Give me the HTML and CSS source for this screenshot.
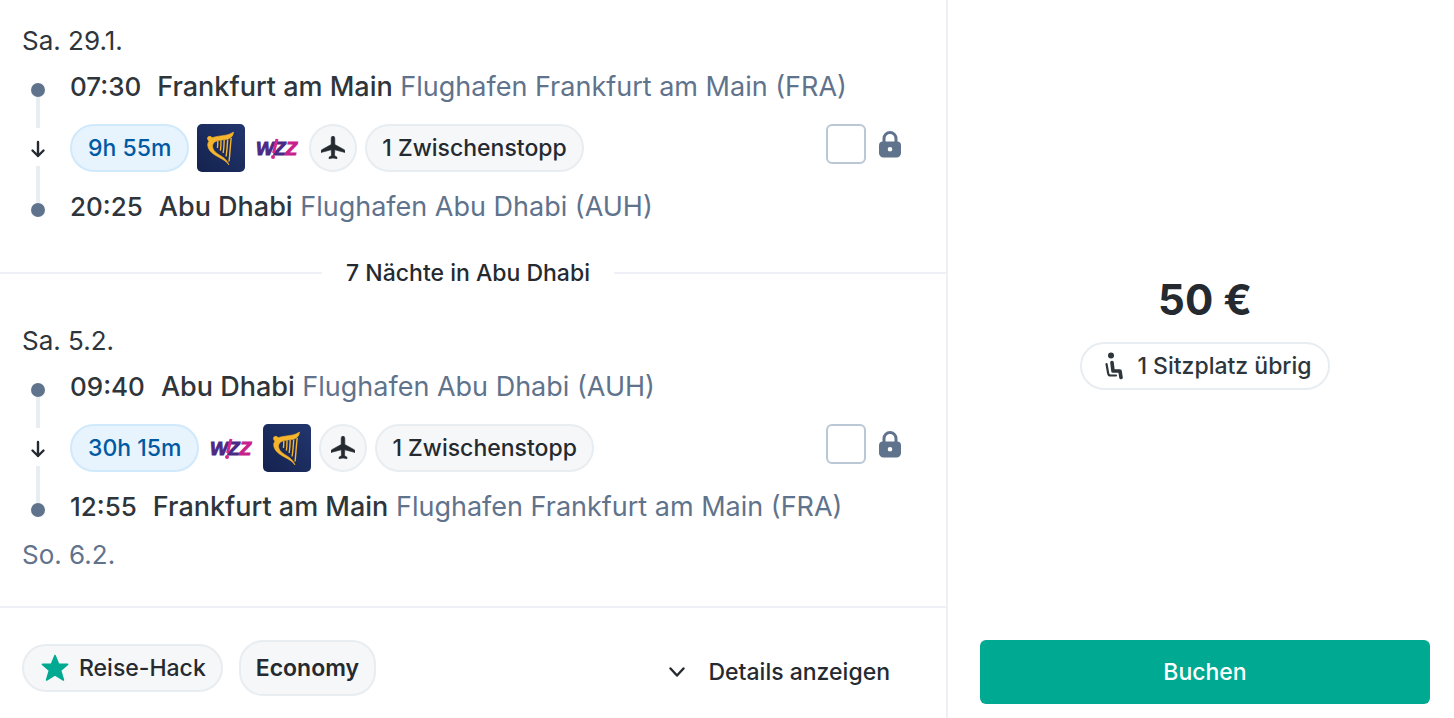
FILE: index.html
```html
<!DOCTYPE html>
<html lang="de">
<head>
    <meta charset="UTF-8">
    <meta name="viewport" content="width=device-width, initial-scale=1.0">
    <title>Frankfurt am Main – Abu Dhabi</title>
    <link rel="stylesheet" href="styles.css">
</head>
<body>
    <!-- Icons -->
    <svg class="sprite" aria-hidden="true">
        <defs>
            <linearGradient id="navy" x1="0" y1="1" x2="1" y2="0">
                <stop offset="0" stop-color="#14224d"/>
                <stop offset="1" stop-color="#22366f"/>
            </linearGradient>
        </defs>
        <symbol id="icon-arrow" viewBox="0 0 16 38">
            <path d="M8 14v14M2.500 22.500L8 28l5.500-5.500" fill="none" stroke="currentColor" stroke-width="2.400" stroke-linecap="round" stroke-linejoin="round"/>
        </symbol>
        <symbol id="icon-plane" viewBox="0 0 24 24">
            <path d="M12 0c1.200 0 1.800 1.300 1.800 2.800v5.700l9.400 5.200c.5.300.8.700.8 1.300v1.500l-10.200-2.700-.3 5.700 2.500 1.700v1.500L12 22l-4 .7v-1.500l2.500-1.700-.3-5.700L0 16.500V15c0-.6.3-1 .8-1.300l9.400-5.200V2.800C10.200 1.300 10.800 0 12 0z" fill="currentColor" stroke="currentColor" stroke-width=".6"/>
        </symbol>
        <symbol id="icon-lock" viewBox="0 0 22 28">
            <path d="M5 12V8.500a6 6 0 0 1 12 0V12" fill="none" stroke="currentColor" stroke-width="3"/>
            <path d="M4 11.500h14a4 4 0 0 1 4 4V23a4.500 4.500 0 0 1-4.500 4.500h-13A4.500 4.500 0 0 1 0 23v-7.500a4 4 0 0 1 4-4zM11 17a2.300 2.300 0 1 0 0 4.600 2.300 2.300 0 0 0 0-4.600z" fill="currentColor" fill-rule="evenodd"/>
        </symbol>
        <symbol id="logo-ryanair" viewBox="0 0 48 48">
            <rect width="48" height="48" rx="5" fill="url(#navy)"/>
            <path d="M10.500 13.500c1.200-1.600 3.400-1.500 4.500.2 5-1.500 9.500-1.800 13.500-2.500 3.500-.6 5.800-1.800 8-3.200-.2 3.800-2.500 6.400-6.200 7.200-4.800.9-9.500.6-12.600 2.800-3.200 2.300-2.600 6.800.6 9.900 4.500 4.200 11.200 5.500 13.700 13.100-2.700-3.700-5.800-5.500-9.300-7.300-6-3.100-11.500-6.700-12-12.500-.1-1.800.6-3 1.300-4-1-.8-1.700-2-1.500-3.700z" fill="#f7b52c" stroke="#f7b52c" stroke-width=".6"/>
            <path d="M34.200 14c-1 8-1.200 15.500-2.200 23.500M30.700 15.500c-.4 6-.8 11.500-1.600 17M27.200 16c-.1 5-.5 9.500-1 13M24 16.200c0 4-.2 7.800-.6 10.500M20.800 17c0 3-.1 5.500-.4 7" fill="none" stroke="#f7b52c" stroke-width="1.400"/>
        </symbol>
        <symbol id="icon-star" viewBox="0 0 28 28">
            <path d="M14 1.500l3.600 8.700 9 .2-7 6 2.800 9.600-8.400-5.300L5.600 26l2.800-9.600-7-6 9-.2z" fill="currentColor" stroke="currentColor" stroke-width="1.600" stroke-linejoin="round"/>
        </symbol>
        <symbol id="icon-seat" viewBox="0 0 18 28">
            <circle cx="6" cy="3.500" r="3" fill="currentColor"/>
            <path d="M7 10.500l1 8.500h7l1 6.500" fill="none" stroke="currentColor" stroke-width="3.600" stroke-linecap="round" stroke-linejoin="round"/>
            <path d="M1.500 12l1.700 9.500c.3 1.400 1 2 2.300 2H11" fill="none" stroke="currentColor" stroke-width="2.200" stroke-linecap="round"/>
        </symbol>
        <symbol id="icon-chevron" viewBox="0 0 16 16">
            <path d="M1.500 4.500L8 11.500l6.500-7" fill="none" stroke="currentColor" stroke-width="2.400" stroke-linecap="round" stroke-linejoin="round"/>
        </symbol>
    </svg>

    <article class="journey">
        <div class="trip">
            <!-- Hinflug -->
            <section class="leg">
                <div class="date">Sa. 29.1.</div>
                <div class="route">
                    <div class="timeline">
                        <span class="dot"></span>
                        <span class="line line-top"></span>
                        <svg class="arrow"><use href="#icon-arrow"/></svg>
                        <span class="line line-bottom"></span>
                        <span class="dot"></span>
                    </div>
                    <div class="stop">
                        <time class="time">07:30</time>
                        <span><strong>Frankfurt am Main</strong> <span class="airport">Flughafen Frankfurt am Main (FRA)</span></span>
                    </div>
                    <div class="info">
                        <span class="badge badge-time">9h 55m</span>
                        <svg class="carrier"><use href="#logo-ryanair"/></svg>
                        <svg class="carrier wizz" viewBox="0 0 48 48">
                            <text x="3" y="31">WZ<tspan class="pink">Z</tspan></text>
                            <path d="M24 15l-3.500 14" stroke="#d6248f" stroke-width="3"/>
                            <circle cx="20" cy="33" r="2" fill="#d6248f"/>
                        </svg>
                        <span class="badge badge-round"><svg class="plane"><use href="#icon-plane"/></svg></span>
                        <span class="badge">1 Zwischenstopp</span>
                        <label class="lock">
                            <input type="checkbox" aria-label="Hinflug merken">
                            <svg class="lock-icon"><use href="#icon-lock"/></svg>
                        </label>
                    </div>
                    <div class="stop">
                        <time class="time">20:25</time>
                        <span><strong>Abu Dhabi</strong> <span class="airport">Flughafen Abu Dhabi (AUH)</span></span>
                    </div>
                </div>
            </section>

            <div class="nights">7 Nächte in Abu Dhabi</div>

            <!-- Rückflug -->
            <section class="leg">
                <div class="date">Sa. 5.2.</div>
                <div class="route">
                    <div class="timeline">
                        <span class="dot"></span>
                        <span class="line line-top"></span>
                        <svg class="arrow"><use href="#icon-arrow"/></svg>
                        <span class="line line-bottom"></span>
                        <span class="dot"></span>
                    </div>
                    <div class="stop">
                        <time class="time">09:40</time>
                        <span><strong>Abu Dhabi</strong> <span class="airport">Flughafen Abu Dhabi (AUH)</span></span>
                    </div>
                    <div class="info">
                        <span class="badge badge-time">30h 15m</span>
                        <svg class="carrier wizz" viewBox="0 0 48 48">
                            <text x="3" y="31">WZ<tspan class="pink">Z</tspan></text>
                            <path d="M24 15l-3.500 14" stroke="#d6248f" stroke-width="3"/>
                            <circle cx="20" cy="33" r="2" fill="#d6248f"/>
                        </svg>
                        <svg class="carrier"><use href="#logo-ryanair"/></svg>
                        <span class="badge badge-round"><svg class="plane"><use href="#icon-plane"/></svg></span>
                        <span class="badge">1 Zwischenstopp</span>
                        <label class="lock">
                            <input type="checkbox" aria-label="Rückflug merken">
                            <svg class="lock-icon"><use href="#icon-lock"/></svg>
                        </label>
                    </div>
                    <div class="stop">
                        <time class="time">12:55</time>
                        <span><strong>Frankfurt am Main</strong> <span class="airport">Flughafen Frankfurt am Main (FRA)</span></span>
                    </div>
                </div>
                <div class="date date-arrival">So. 6.2.</div>
            </section>

            <footer class="trip-footer">
                <div class="tags">
                    <span class="badge"><svg class="star"><use href="#icon-star"/></svg>Reise-Hack</span>
                    <span class="badge badge-class">Economy</span>
                </div>
                <button class="details" type="button"><svg class="chevron"><use href="#icon-chevron"/></svg>Details anzeigen</button>
            </footer>
        </div>

        <aside class="booking">
            <div class="offer">
                <div class="price">50 €</div>
                <span class="badge badge-seats"><svg class="seat"><use href="#icon-seat"/></svg>1 Sitzplatz übrig</span>
            </div>
            <button class="book-btn" type="button">Buchen</button>
        </aside>
    </article>
</body>
</html>
```
FILE: styles.css
```css
:root {
    --ink: #252a31;
    --text: #2e353b;
    --muted: #5f738c;
    --border: #e8edf1;
    --divider: #eff0f5;
    --cloud: #f5f7f9;
    --accent: #00a991;
}

* {
    box-sizing: border-box;
}

body {
    margin: 0;
    font-family: Inter, "Liberation Sans", sans-serif;
    font-size: 26px;
    line-height: 32px;
    color: var(--text);
    background: #fff;
}

button {
    font: inherit;
    border: none;
    cursor: pointer;
}

svg {
    flex-shrink: 0;
}

.sprite {
    position: absolute;
    width: 0;
    height: 0;
}

.journey {
    display: grid;
    grid-template-columns: minmax(0, 1fr) 506px;
    min-height: 100vh;
}

.trip {
    border-right: 2px solid var(--divider);
}

/* Flight leg */
.leg {
    padding: 25px 22px 24px;
}

.date {
    margin-bottom: 7px;
}

.date-arrival {
    margin: 7px 0 11px;
    color: var(--muted);
}

.route {
    display: grid;
    grid-template-columns: 32px minmax(0, 1fr);
    grid-auto-rows: 48px;
    gap: 12px 16px;
}

.timeline {
    grid-row: 1 / span 3;
    display: flex;
    flex-direction: column;
    align-items: center;
    padding: 19px 0 15px;
}

.dot {
    width: 14px;
    height: 14px;
    border-radius: 50%;
    background: var(--muted);
}

.line {
    width: 4px;
    background: var(--border);
}

.line-top {
    flex: 5;
}

.line-bottom {
    flex: 6;
}

.arrow {
    width: 16px;
    height: 38px;
    color: var(--ink);
}

.stop {
    display: flex;
    align-items: center;
    gap: 16px;
    padding-bottom: 2px;
    font-size: 27px;
    white-space: nowrap;
}

.time {
    font-size: 26px;
}

.time,
.stop strong {
    font-weight: 500;
}

.airport {
    color: var(--muted);
}

.info {
    display: flex;
    align-items: center;
    gap: 8px;
}

.badge {
    display: inline-flex;
    align-items: center;
    height: 48px;
    padding: 0 15px;
    border: 2px solid var(--border);
    border-radius: 24px;
    background: var(--cloud);
    color: var(--ink);
    font-size: 23px;
    font-weight: 500;
    white-space: nowrap;
}

.badge-time {
    padding: 0 16px;
    border-color: #d0e9fb;
    background: #e8f4fd;
    color: #005aa3;
}

.badge-round {
    width: 48px;
    padding: 0;
    justify-content: center;
}

.plane {
    width: 24px;
    height: 24px;
}

.carrier {
    width: 48px;
    height: 48px;
}

.wizz text {
    font-family: "Liberation Sans", sans-serif;
    font-size: 19px;
    font-weight: 700;
    font-style: italic;
    fill: #4b2a83;
    stroke: #4b2a83;
}

.wizz .pink {
    fill: #c9218b;
    stroke: #c9218b;
}

.lock {
    display: flex;
    align-items: center;
    gap: 13px;
    margin: 0 23px 8px auto;
    color: var(--muted);
}

.lock input {
    appearance: none;
    width: 40px;
    height: 40px;
    margin: 0;
    border: 2px solid #bac7d5;
    border-radius: 6px;
    background: #fff;
}

.lock input:checked {
    background: var(--accent);
}

.lock-icon {
    width: 22px;
    height: 28px;
}

/* Stay between flights */
.nights {
    display: flex;
    align-items: center;
    gap: 24px;
    margin-bottom: 11px;
    padding-top: 1px;
    color: var(--ink);
    font-size: 23px;
    font-weight: 500;
}

.nights::before,
.nights::after {
    content: "";
    flex: 1;
    height: 2px;
    background: var(--divider);
}

.nights::after {
    flex-basis: 10px;
}

/* Footer */
.trip-footer {
    display: flex;
    align-items: flex-start;
    justify-content: space-between;
    padding: 32px 22px 14px;
    border-top: 2px solid var(--divider);
}

.tags {
    display: flex;
    align-items: center;
    gap: 16px;
}

.star {
    width: 28px;
    height: 28px;
    margin: 0 10px 0 2px;
    color: var(--accent);
}

.badge-class {
    height: 56px;
    font-weight: 600;
}

.details {
    display: flex;
    align-items: center;
    gap: 24px;
    height: 64px;
    padding: 0 34px;
    background: none;
    color: var(--ink);
    font-size: 23px;
    font-weight: 500;
}

.chevron {
    width: 16px;
    height: 16px;
}

/* Price and booking */
.booking {
    display: flex;
    flex-direction: column;
    padding: 26px 24px 14px 32px;
}

.offer {
    flex: 1;
    display: flex;
    flex-direction: column;
    align-items: center;
    justify-content: center;
    gap: 18px;
}

.price {
    color: var(--ink);
    font-size: 42px;
    font-weight: 700;
    line-height: 48px;
}

.badge-seats {
    padding: 0 16px;
    background: #fff;
    color: var(--text);
}

.seat {
    width: 18px;
    height: 28px;
    margin: 0 14px 0 7px;
}

.book-btn {
    height: 64px;
    border-radius: 6px;
    background: var(--accent);
    color: #fff;
    font-size: 23px;
    font-weight: 500;
}
```
